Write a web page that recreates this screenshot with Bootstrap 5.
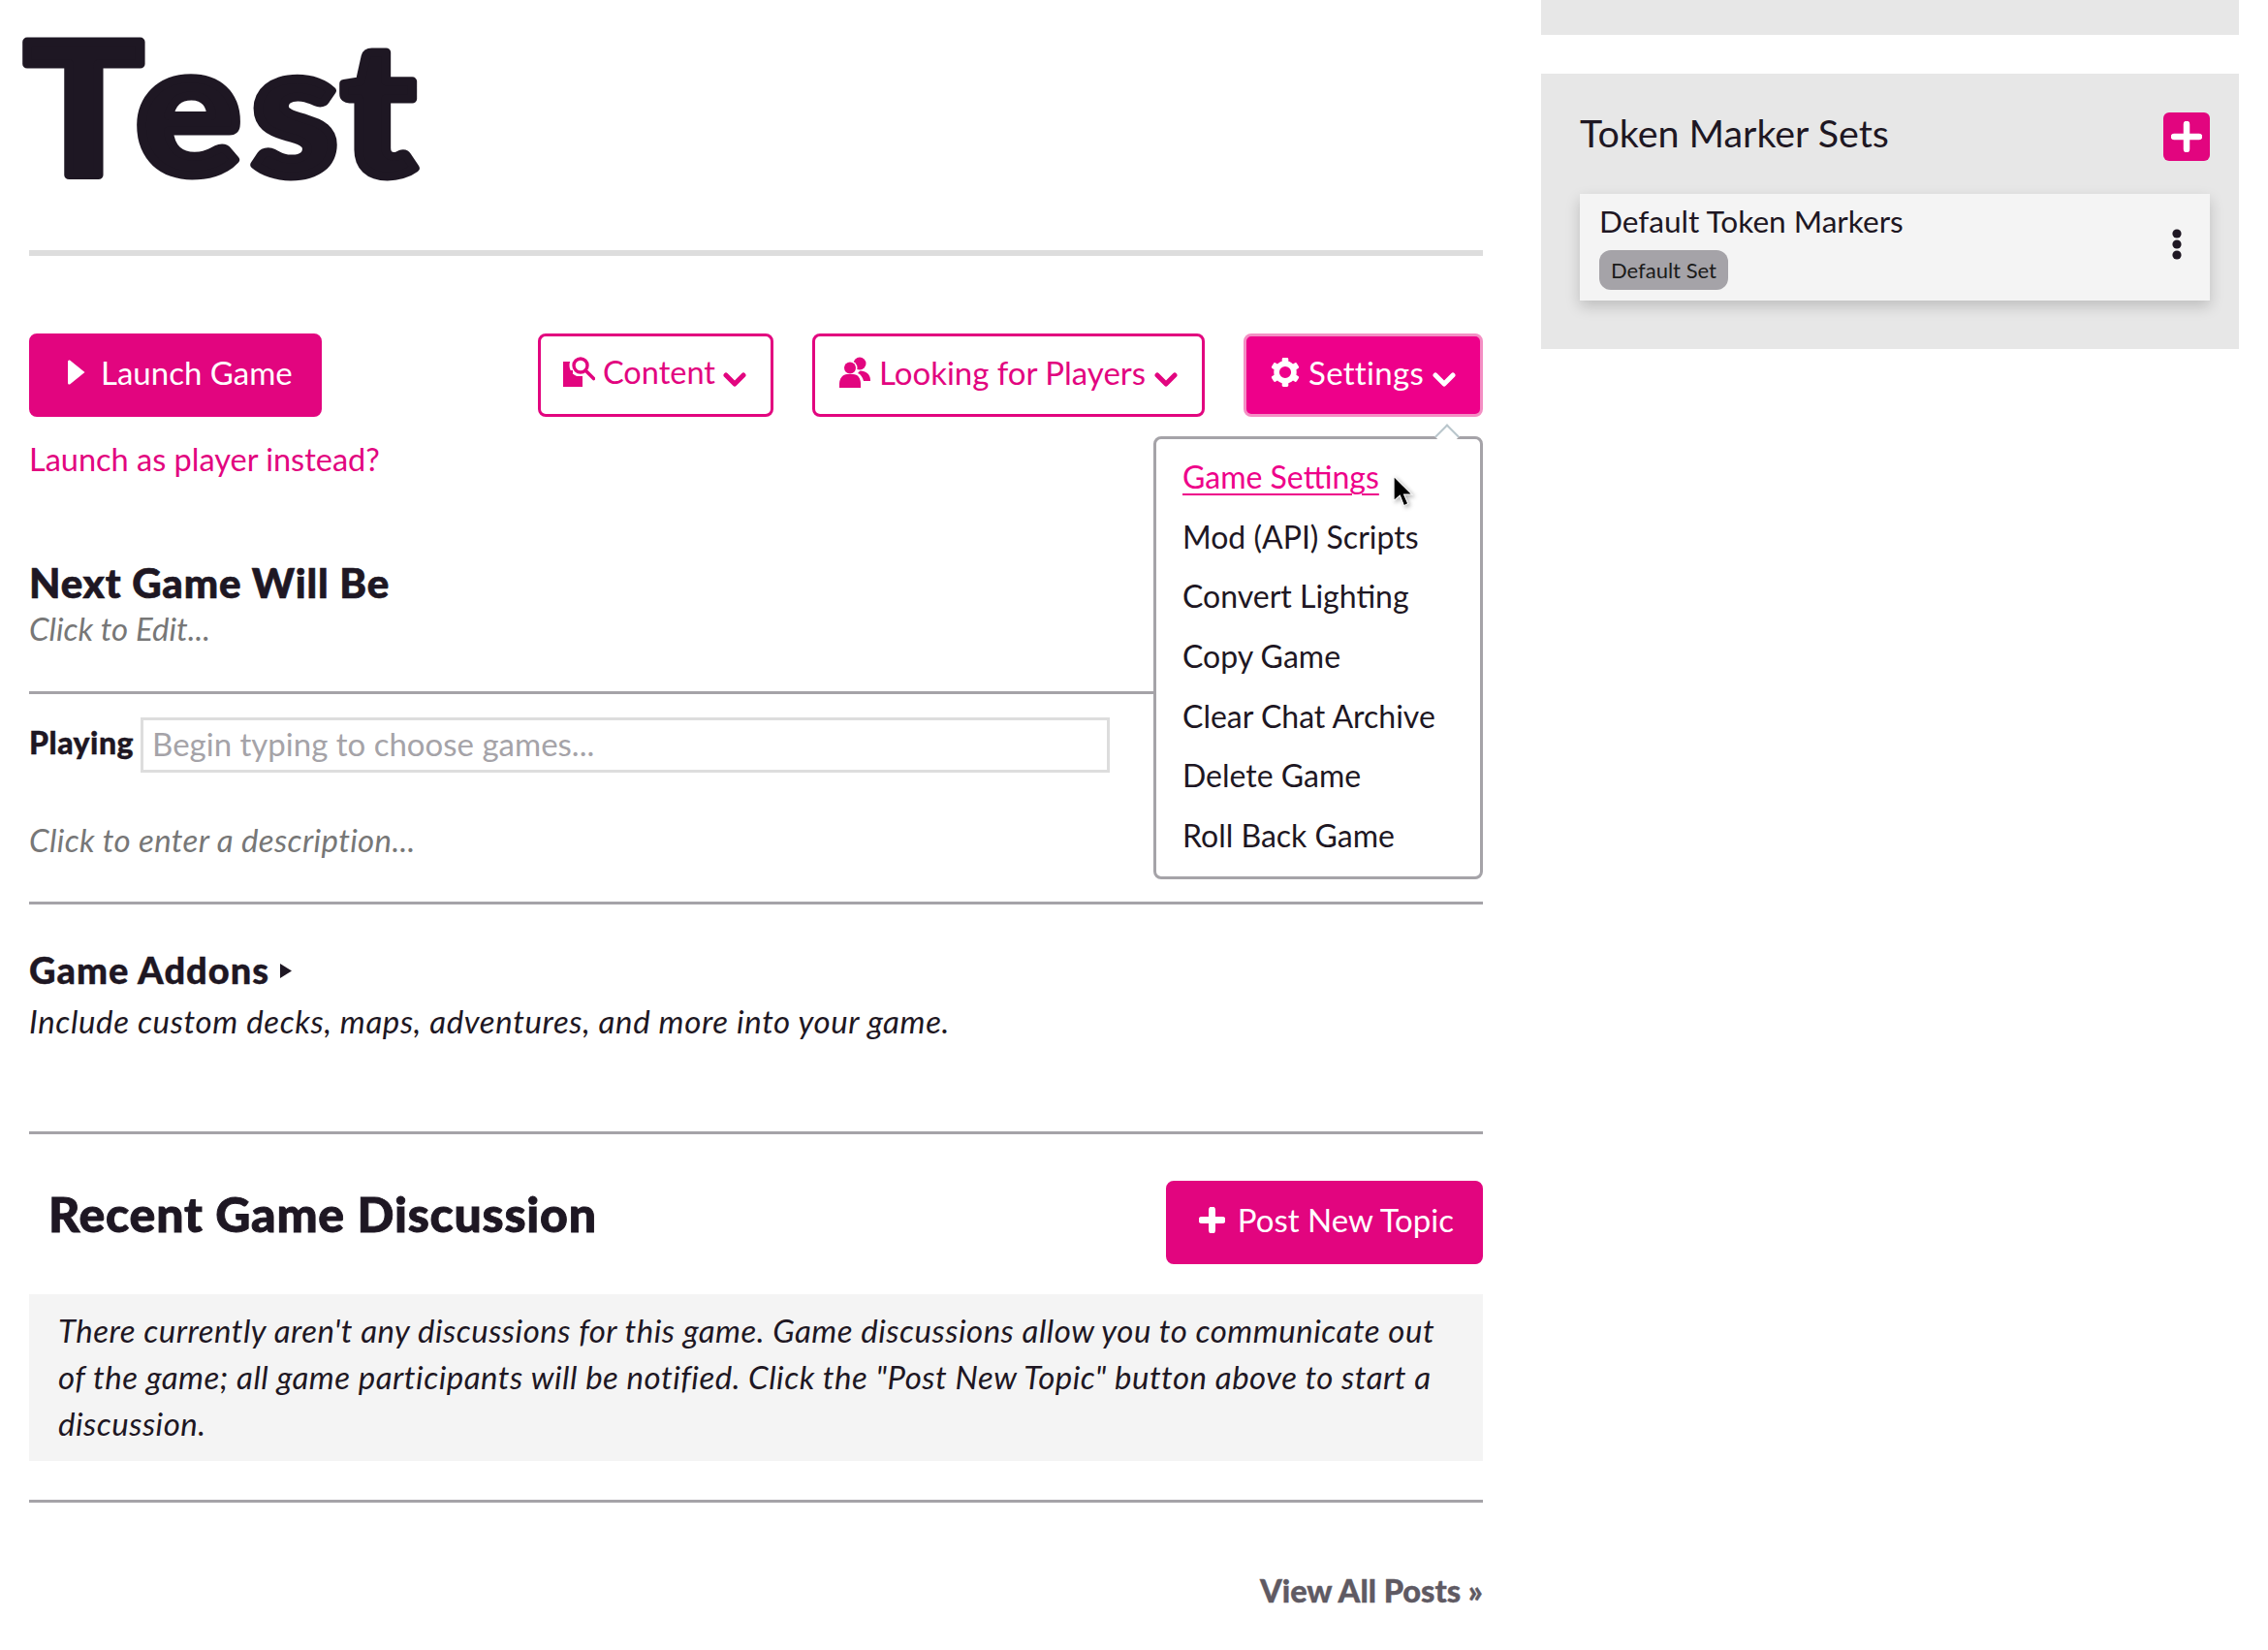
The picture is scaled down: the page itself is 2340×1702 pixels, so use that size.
<!DOCTYPE html>
<html lang="en"><head><meta charset="utf-8"><title>Test</title>
<link href="https://cdn.jsdelivr.net/npm/bootstrap@5.3.0/dist/css/bootstrap.min.css" rel="stylesheet">
<style>
:root{--pk:#e2057f;--ink:#1e1723;--rule:#a5a3a8}
body{font-family:"Lato","Liberation Sans",sans-serif;font-size:32px;color:var(--ink);background:#fff;margin:0}
.page-wrap{display:flex;padding-left:30px;width:2340px;min-height:1702px}
.main-pane{width:1500px;flex:none}
.side-pane{width:720px;flex:none;margin-left:60px}
.game-title{height:258px;margin:0 0 0 -10px}
.title-art{display:block;overflow:visible}
.title-art text{font-family:"Lato",sans-serif;font-weight:900;font-size:188px;fill:var(--ink);stroke:var(--ink);stroke-width:9px;stroke-linejoin:round}
.rule-thick{height:6px;background:#ddd;margin:0 0 80px}
.rule-thin{height:3px;background:var(--rule);margin:0}
.btn-game{font-size:33px;height:86px;padding:0 25px 6px;border-radius:8px;border:3px solid var(--pk);display:inline-flex;align-items:center;gap:9px;line-height:1;white-space:nowrap}
.btn-wide{padding:0 27px 6px 37px;gap:16px}
.btn-post{padding:0 27px 6px 31px;gap:13px}
.btn-content{font-size:32.500px;padding:0 25px 6px 23px;gap:8px}
.btn-solid,.btn-solid:hover{background:var(--pk);color:#fff;border-color:var(--pk)}
.btn-line{background:#fff;color:var(--pk)}
.btn-open,.btn-open:hover{background:#ee008a;color:#fff;border-color:#f48fc4;letter-spacing:.3px}
.chev{margin-top:14px}
.btn-row{gap:40px}
.menu-anchor{position:relative}
.game-menu{display:block;position:absolute;top:106px;right:0;left:auto;width:340px;height:457px;padding:8px 0 0;margin:0;border:3px solid var(--rule);border-radius:8px;font-size:32px;z-index:5}
.game-menu::before{content:"";position:absolute;top:-12px;right:25px;width:18px;height:18px;background:#fff;border-left:2px solid #b9c6cc;border-top:2px solid #b9c6cc;transform:rotate(45deg)}
.game-menu .dropdown-item{padding:0 27px;height:61.700px;line-height:61.700px;color:var(--ink);background:none}
.game-menu .dropdown-item.is-hover{color:#ee008a;background:none}
.game-menu .dropdown-item.is-hover span{text-decoration:underline;text-underline-offset:5px;text-decoration-thickness:2px}
.mouse-arrow{position:absolute;left:243px;top:37px;width:23px;height:34px;filter:drop-shadow(2px 2px 2px rgba(0,0,0,.3))}
.link-pink{color:var(--pk);text-decoration:none}
.player-link{margin-top:22px;line-height:44px;font-size:32.500px}
.sub-head{font-weight:900;font-size:42px;letter-spacing:.8px;line-height:48px;margin:81px 0 0;-webkit-text-stroke:.7px var(--ink)}
.hint{color:#777;font-style:italic;font-size:33px}
.hint-edit{line-height:46px;margin-bottom:42px}
.hint-desc{line-height:40px;letter-spacing:.35px;height:135px;padding-top:51px}
.play-row{padding:24px 0 0;height:79px}
.play-label{font-weight:900;font-size:32px;letter-spacing:.5px;line-height:57px;margin:-3px 7px 0 0;-webkit-text-stroke:.4px var(--ink)}
.play-input{width:1000px;height:57px;border:3px solid #ddd;border-radius:0;padding:0 9px 3px;font-size:33px;color:var(--ink);flex:none}
.play-input::placeholder{color:#a5a3a8}
.addon-head{font-weight:900;font-size:38px;letter-spacing:1px;line-height:44px;margin:45px 0 0;display:flex;align-items:center;-webkit-text-stroke:.4px var(--ink)}
.addon-tri{margin-left:11px;margin-top:2px}
.addon-text{font-style:italic;font-size:33px;letter-spacing:.63px;line-height:50px;margin:6px 0 89px}
.disc-row{padding:48px 0 31px 20px}
.disc-head{font-weight:900;font-size:50px;letter-spacing:.75px;line-height:60px;margin:4px 0 0;-webkit-text-stroke:.9px var(--ink)}
.disc-box{background:#f4f4f4;padding:13px 30px 10px;font-style:italic;font-size:33px;letter-spacing:.5px;line-height:48px;height:172px;margin-bottom:40px}
.view-all{display:block;text-align:right;font-weight:900;font-size:32.500px;line-height:40px;color:#5f5a63;text-decoration:none;margin-top:71px;-webkit-text-stroke:.4px #5f5a63}
.side-strip{background:#e7e7e7;height:36px;margin-bottom:40px}
.side-panel{background:#e7e7e7;height:284px;padding:40px 30px 0 40px}
.side-title{font-size:39.400px;line-height:44px;font-weight:400;margin:-1px 0 0}
.side-add{width:48px;height:50px;padding:0;background:var(--pk);border:0;border-radius:6px;display:flex;align-items:center;justify-content:center}
.marker-card{height:110px;background:#f4f4f4;border:0;border-radius:0;margin-top:34px;box-shadow:0 6px 14px rgba(0,0,0,.18);padding:11px 29px 12px 20px;display:flex;flex-direction:row;justify-content:space-between;align-items:center}
.marker-name{line-height:34px;font-size:31.600px}
.default-tag{background:#a5a3a8;color:#1b1b1b;font-size:22px;font-weight:400;height:41px;line-height:41px;padding:0 12px;border-radius:12px;display:inline-block;margin-top:13px}
.kebab{margin-top:-6px}
</style></head>
<body>
<div class="page-wrap">
  <div class="main-pane">
    <h1 class="game-title"><svg class="title-art" width="500" height="258" viewBox="0 0 500 258"><text y="180" x="4.600 111.100 221.300 307.400" transform="scale(1.08 1)">Test</text></svg></h1>
    <div class="rule-thick"></div>
    <div class="d-flex align-items-start">
      <div>
        <a class="btn btn-game btn-solid btn-wide" href="#"><svg width="18" height="26" viewBox="0 0 18 26"><path d="M2 0.5 L17.500 13 L2 25.500 Q0 26 0 24 V2 Q0 0 2 0.5Z" fill="#fff"/></svg><span>Launch Game</span></a>
        <div class="player-link"><a class="link-pink" href="#">Launch as player instead?</a></div>
      </div>
      <div class="ms-auto d-flex btn-row">
        <a class="btn btn-game btn-line btn-content" href="#"><svg width="33" height="32" viewBox="0 0 33 32"><path fill="#e2057f" d="M0 5h20v26H0z"/><circle cx="18" cy="9" r="11.500" fill="#fff"/><path fill="#e2057f" d="M0 5h6v5H4v4h6v3H4v3h16v11H0z"/><circle cx="18" cy="9" r="7" fill="none" stroke="#e2057f" stroke-width="3.400"/><path d="M23.500 14.500l8 8" stroke="#e2057f" stroke-width="3.600" stroke-linecap="round"/></svg>Content<svg class="chev" width="24" height="15" viewBox="0 0 24 15"><path d="M3 3l9 9 9-9" fill="none" stroke="#e2057f" stroke-width="5" stroke-linecap="round" stroke-linejoin="round"/></svg></a>
        <a class="btn btn-game btn-line" href="#"><svg width="32" height="32" viewBox="0 0 32 32"><circle cx="21" cy="7" r="6.500" fill="#e2057f"/><path fill="#e2057f" d="M22 14.500c5 0 10 3.500 10 9.500v1H25c-1-4-3-7-6-8 1-1 1.500-2.500 3-2.500z"/><circle cx="11" cy="11.500" r="7.500" fill="#fff"/><circle cx="11" cy="11.500" r="6" fill="#e2057f"/><path fill="#e2057f" d="M0 32v-4c0-6 4-10 8-10h6c5 0 8 4 8 10v4z"/></svg>Looking for Players<svg class="chev" width="24" height="15" viewBox="0 0 24 15"><path d="M3 3l9 9 9-9" fill="none" stroke="#e2057f" stroke-width="5" stroke-linecap="round" stroke-linejoin="round"/></svg></a>
        <div class="dropdown menu-anchor">
          <a class="btn btn-game btn-open" href="#"><svg width="30" height="32" viewBox="0 0 32 32"><circle cx="16" cy="16" r="9.500" fill="none" stroke="#fff" stroke-width="6"/><g fill="#fff"><rect x="12.500" y="0" width="7" height="8" rx="1.500"/><rect x="12.500" y="0" width="7" height="8" rx="1.500" transform="rotate(60 16 16)"/><rect x="12.500" y="0" width="7" height="8" rx="1.500" transform="rotate(120 16 16)"/><rect x="12.500" y="0" width="7" height="8" rx="1.500" transform="rotate(180 16 16)"/><rect x="12.500" y="0" width="7" height="8" rx="1.500" transform="rotate(240 16 16)"/><rect x="12.500" y="0" width="7" height="8" rx="1.500" transform="rotate(300 16 16)"/></g></svg>Settings<svg class="chev" width="24" height="15" viewBox="0 0 24 15"><path d="M3 3l9 9 9-9" fill="none" stroke="#fff" stroke-width="5" stroke-linecap="round" stroke-linejoin="round"/></svg></a>
          <div class="dropdown-menu game-menu">
            <a class="dropdown-item is-hover" href="#"><span>Game Settings</span></a>
            <a class="dropdown-item" href="#">Mod (API) Scripts</a>
            <a class="dropdown-item" href="#">Convert Lighting</a>
            <a class="dropdown-item" href="#">Copy Game</a>
            <a class="dropdown-item" href="#">Clear Chat Archive</a>
            <a class="dropdown-item" href="#">Delete Game</a>
            <a class="dropdown-item" href="#">Roll Back Game</a>
            <svg class="mouse-arrow" viewBox="0 0 22 32"><path d="M2 1v24l6-5 4 10 4-2-4-9h8z" fill="#000" stroke="#fff" stroke-width="1"/></svg>
          </div>
        </div>
      </div>
    </div>
    <h2 class="sub-head">Next Game Will Be</h2>
    <div class="hint hint-edit">Click to Edit...</div>
    <div class="rule-thin"></div>
    <div class="play-row d-flex align-items-start"><label class="play-label">Playing</label><input class="form-control play-input" placeholder="Begin typing to choose games..."></div>
    <div class="hint hint-desc">Click to enter a description...</div>
    <div class="rule-thin"></div>
    <h3 class="addon-head">Game Addons<svg class="addon-tri" width="12" height="15" viewBox="0 0 12 15"><path d="M0 0l12 7.500L0 15z" fill="#1e1723"/></svg></h3>
    <p class="addon-text">Include custom decks, maps, adventures, and more into your game.</p>
    <div class="rule-thin"></div>
    <div class="disc-row d-flex justify-content-between align-items-start">
      <h2 class="disc-head">Recent Game Discussion</h2>
      <a class="btn btn-game btn-solid btn-post" href="#"><svg width="27" height="27" viewBox="0 0 27 27"><path d="M13.500 3v21M3 13.500h21" stroke="#fff" stroke-width="7" stroke-linecap="round"/></svg><span>Post New Topic</span></a>
    </div>
    <div class="disc-box">There currently aren't any discussions for this game. Game discussions allow you to communicate out of the game; all game participants will be notified. Click the "Post New Topic" button above to start a discussion.</div>
    <div class="rule-thin"></div>
    <a class="view-all" href="#">View All Posts »</a>
  </div>
  <div class="side-pane">
    <div class="side-strip"></div>
    <div class="side-panel">
      <div class="d-flex justify-content-between align-items-start">
        <h3 class="side-title">Token Marker Sets</h3>
        <button class="btn side-add" aria-label="Add"><svg width="32" height="32" viewBox="0 0 32 32"><path d="M16 3v26M3 16h26" stroke="#fff" stroke-width="6.500" stroke-linecap="round"/></svg></button>
      </div>
      <div class="card marker-card">
        <div><div class="marker-name">Default Token Markers</div><span class="default-tag">Default Set</span></div>
        <svg class="kebab" width="10" height="32" viewBox="0 0 10 32"><circle cx="5" cy="5" r="4.600" fill="#1e1723"/><circle cx="5" cy="16" r="4.600" fill="#1e1723"/><circle cx="5" cy="27" r="4.600" fill="#1e1723"/></svg>
      </div>
    </div>
  </div>
</div>
<script src="https://cdn.jsdelivr.net/npm/bootstrap@5.3.0/dist/js/bootstrap.bundle.min.js"></script>
</body></html>
